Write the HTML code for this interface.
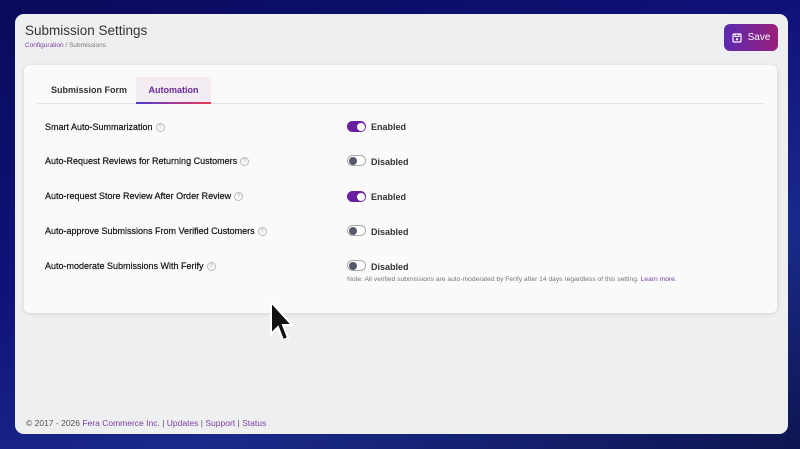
<!DOCTYPE html>
<html><head><style>
*{box-sizing:border-box;margin:0;padding:0}
body{width:800px;height:449px;overflow:hidden;background:linear-gradient(160deg,#0a0a5a 0%,#10127a 40%,#1a2a8a 70%,#0d1650 100%);font-family:"Liberation Sans",sans-serif;position:relative}
.win{position:absolute;left:15px;top:14px;width:773px;height:420px;background:#eeeff0;border-radius:9px;overflow:hidden}
h1{position:absolute;left:10px;top:9px;font-size:13.5px;font-weight:normal;color:#333}
.bc{position:absolute;left:10px;top:28px;font-size:6.5px;color:#777}
.bc span{color:#7b3fa0}
.save{position:absolute;left:709px;top:10px;width:54px;height:27px;border-radius:6px;background:linear-gradient(90deg,#5a2bb0,#9b1f7a);color:#fff;font-size:10px;display:flex;align-items:center;justify-content:center;gap:6px}
.card{position:absolute;left:9px;top:51px;width:753px;height:248px;background:#fafafa;border-radius:6px;box-shadow:0 1px 4px rgba(0,0,0,.12)}
.tabs{position:absolute;left:13px;top:12px;width:727px;height:27px;border-bottom:1px solid #e4e4e4}
.tab{position:absolute;top:0;height:27px;font-size:9px;font-weight:bold;color:#333;line-height:27px}
.t2{left:99px;width:75px;background:#f4ecf3;color:#6a2a9a;text-align:center;border-bottom:2px solid;border-image:linear-gradient(90deg,#4b3ad8,#f03a50) 1}
.row{position:absolute;left:21px;font-size:9px;color:#111;-webkit-text-stroke:0.2px #111}
.q{display:inline-block;width:9px;height:9px;border:1px solid #bbb;border-radius:50%;font-size:6px;color:#aaa;text-align:center;line-height:8px;vertical-align:middle;margin-left:3px;-webkit-text-stroke:0}
.tg{position:absolute;left:323px;width:19px;height:11px;border-radius:6px}
.on{background:#6a1fa0}.on::after{content:"";position:absolute;right:1.5px;top:1.5px;width:8px;height:8px;border-radius:50%;background:#fff}
.off{background:#fff;border:1px solid #aaa}.off::after{content:"";position:absolute;left:1px;top:0.5px;width:8px;height:8px;border-radius:50%;background:#555a6a}
.lb{position:absolute;left:347px;font-size:9px;font-weight:bold;color:#333}
.note{position:absolute;left:323px;top:211px;font-size:6.7px;color:#777}
.note span{color:#7b3fa0}
.ft{position:absolute;left:11px;top:404px;font-size:8.5px;color:#555}
.ft span{color:#7b3fa0}
</style></head><body>
<div class="win">
<h1>Submission Settings</h1>
<div class="bc"><span>Configuration</span> / Submissions</div>
<div class="save"><svg width="10" height="10" viewBox="0 0 10 10"><rect x="1" y="1" width="8" height="8" rx="1" fill="none" stroke="#fff" stroke-width="1.2"/><rect x="3" y="1" width="4" height="2.5" fill="none" stroke="#fff"/><circle cx="5" cy="6.3" r="1.2" fill="#fff"/></svg>Save</div>
<div class="card">
<div class="tabs"><div class="tab" style="left:14px">Submission Form</div><div class="tab t2">Automation</div></div>
<div class="row" style="top:57px">Smart Auto-Summarization<span class="q">?</span></div>
<div class="tg on" style="top:56px"></div><div class="lb" style="top:57px">Enabled</div>
<div class="row" style="top:91px">Auto-Request Reviews for Returning Customers<span class="q">?</span></div>
<div class="tg off" style="top:90px"></div><div class="lb" style="top:92px">Disabled</div>
<div class="row" style="top:126px">Auto-request Store Review After Order Review<span class="q">?</span></div>
<div class="tg on" style="top:126px"></div><div class="lb" style="top:127px">Enabled</div>
<div class="row" style="top:161px">Auto-approve Submissions From Verified Customers<span class="q">?</span></div>
<div class="tg off" style="top:160px"></div><div class="lb" style="top:162px">Disabled</div>
<div class="row" style="top:196px">Auto-moderate Submissions With Ferify<span class="q">?</span></div>
<div class="tg off" style="top:195px"></div><div class="lb" style="top:197px">Disabled</div>
<div class="note">Note: All verified submissions are auto-moderated by Ferify after 14 days regardless of this setting. <span>Learn more.</span></div>
</div>
<div class="ft">© 2017 - 2026 <span>Fera Commerce Inc.</span> | <span>Updates</span> | <span>Support</span> | <span>Status</span></div>
</div>
<svg style="position:absolute;left:268px;top:300px" width="26" height="44" viewBox="0 0 26 44"><path d="M3 2 L3 34 L10 27 L15 40 L20 38 L15 25 L24 25 Z" fill="#111" stroke="#fff" stroke-width="2"/></svg>
</body></html>
